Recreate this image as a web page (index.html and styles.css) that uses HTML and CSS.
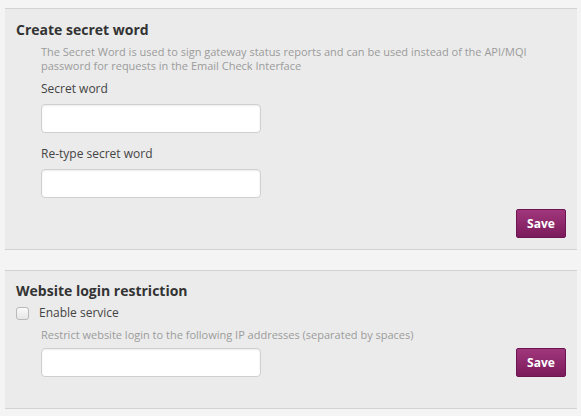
FILE: index.html
```html
<!DOCTYPE html>
<html>
<head>
<meta charset="utf-8">
<link rel="stylesheet" href="styles.css">
</head>
<body>
<section class="panel panel-first">
  <h2 class="panel-title">Create secret word</h2>
  <div class="indent">
    <p class="help">The Secret Word is used to sign gateway status reports and can be used instead of the API/MQI password for requests in the Email Check Interface</p>
    <label class="field-label">Secret word</label>
    <input class="text-input" type="password">
    <label class="field-label field-label-spaced">Re-type secret word</label>
    <input class="text-input" type="password">
  </div>
  <div class="actions">
    <button class="btn-save" type="button">Save</button>
  </div>
</section>
<section class="panel panel-second">
  <h2 class="panel-title">Website login restriction</h2>
  <label class="check-row"><input class="check" type="checkbox"><span>Enable service</span></label>
  <p class="help help-indent">Restrict website login to the following IP addresses (separated by spaces)</p>
  <div class="input-row">
    <input class="text-input input-indent" type="text">
    <button class="btn-save" type="button">Save</button>
  </div>
</section>
</body>
</html>
```
FILE: styles.css
```css
html, body {
  background: #f4f4f4;
}
body {
  margin: 8px 4px 0 5px;
  font-family: "Open Sans", "DejaVu Sans", sans-serif;
  color: #333;
}
.panel {
  background: #ebebeb;
  border-top: 1px solid #d2d2d2;
  border-bottom: 1px solid #d2d2d2;
  padding: 11px 11px 11px 11px;
}
.panel-first {
  margin-bottom: 20px;
}
.panel-second {
  padding-top: 10px;
  padding-bottom: 31px;
}
.panel-title {
  margin: 0;
  font-size: 14px;
  line-height: 20px;
  font-weight: 700;
  color: #333;
}
.indent {
  padding-left: 25px;
  display: flex;
  flex-direction: column;
  align-items: flex-start;
}
.help {
  margin: 5px 0 0 0;
  font-size: 11px;
  line-height: 14px;
  color: #9b9b9b;
}
.help-indent {
  margin: 7px 0 0 25px;
}
.field-label {
  display: block;
  margin-top: 7px;
  font-size: 12px;
  line-height: 17px;
  color: #444;
}
.field-label-spaced {
  margin-top: 12px;
}
.text-input {
  box-sizing: border-box;
  width: 220px;
  height: 29px;
  margin: 7px 0 0 0;
  border: 1px solid #cfcfcf;
  border-radius: 4px;
  background: #fff;
  box-shadow: inset 0 1px 2px rgba(0,0,0,0.08);
  padding: 0 6px;
  font-family: inherit;
  font-size: 12px;
}
.actions {
  display: flex;
  justify-content: flex-end;
  margin-top: 11px;
}
.btn-save {
  box-sizing: border-box;
  width: 50px;
  height: 29px;
  padding: 0;
  border: 1px solid #6c1550;
  border-radius: 2px;
  background: linear-gradient(#a1367c, #7b1b5b);
  color: #fff;
  font-family: inherit;
  font-size: 12px;
  font-weight: 700;
  cursor: pointer;
}
.check-row {
  display: flex;
  align-items: center;
  margin-top: 3px;
  height: 17px;
  font-size: 12px;
  line-height: 17px;
  color: #444;
}
.check {
  appearance: none;
  -webkit-appearance: none;
  box-sizing: border-box;
  width: 13px;
  height: 13px;
  margin: 1px 10px 0 0;
  border: 1px solid #b9b9b9;
  border-radius: 3px;
  background: linear-gradient(#fafafa, #e6e6e6);
}
.input-row {
  display: flex;
  justify-content: space-between;
  align-items: center;
  margin-top: 6px;
}
.input-row .text-input {
  margin-top: 0;
}
.input-indent {
  margin-left: 25px;
}
```
